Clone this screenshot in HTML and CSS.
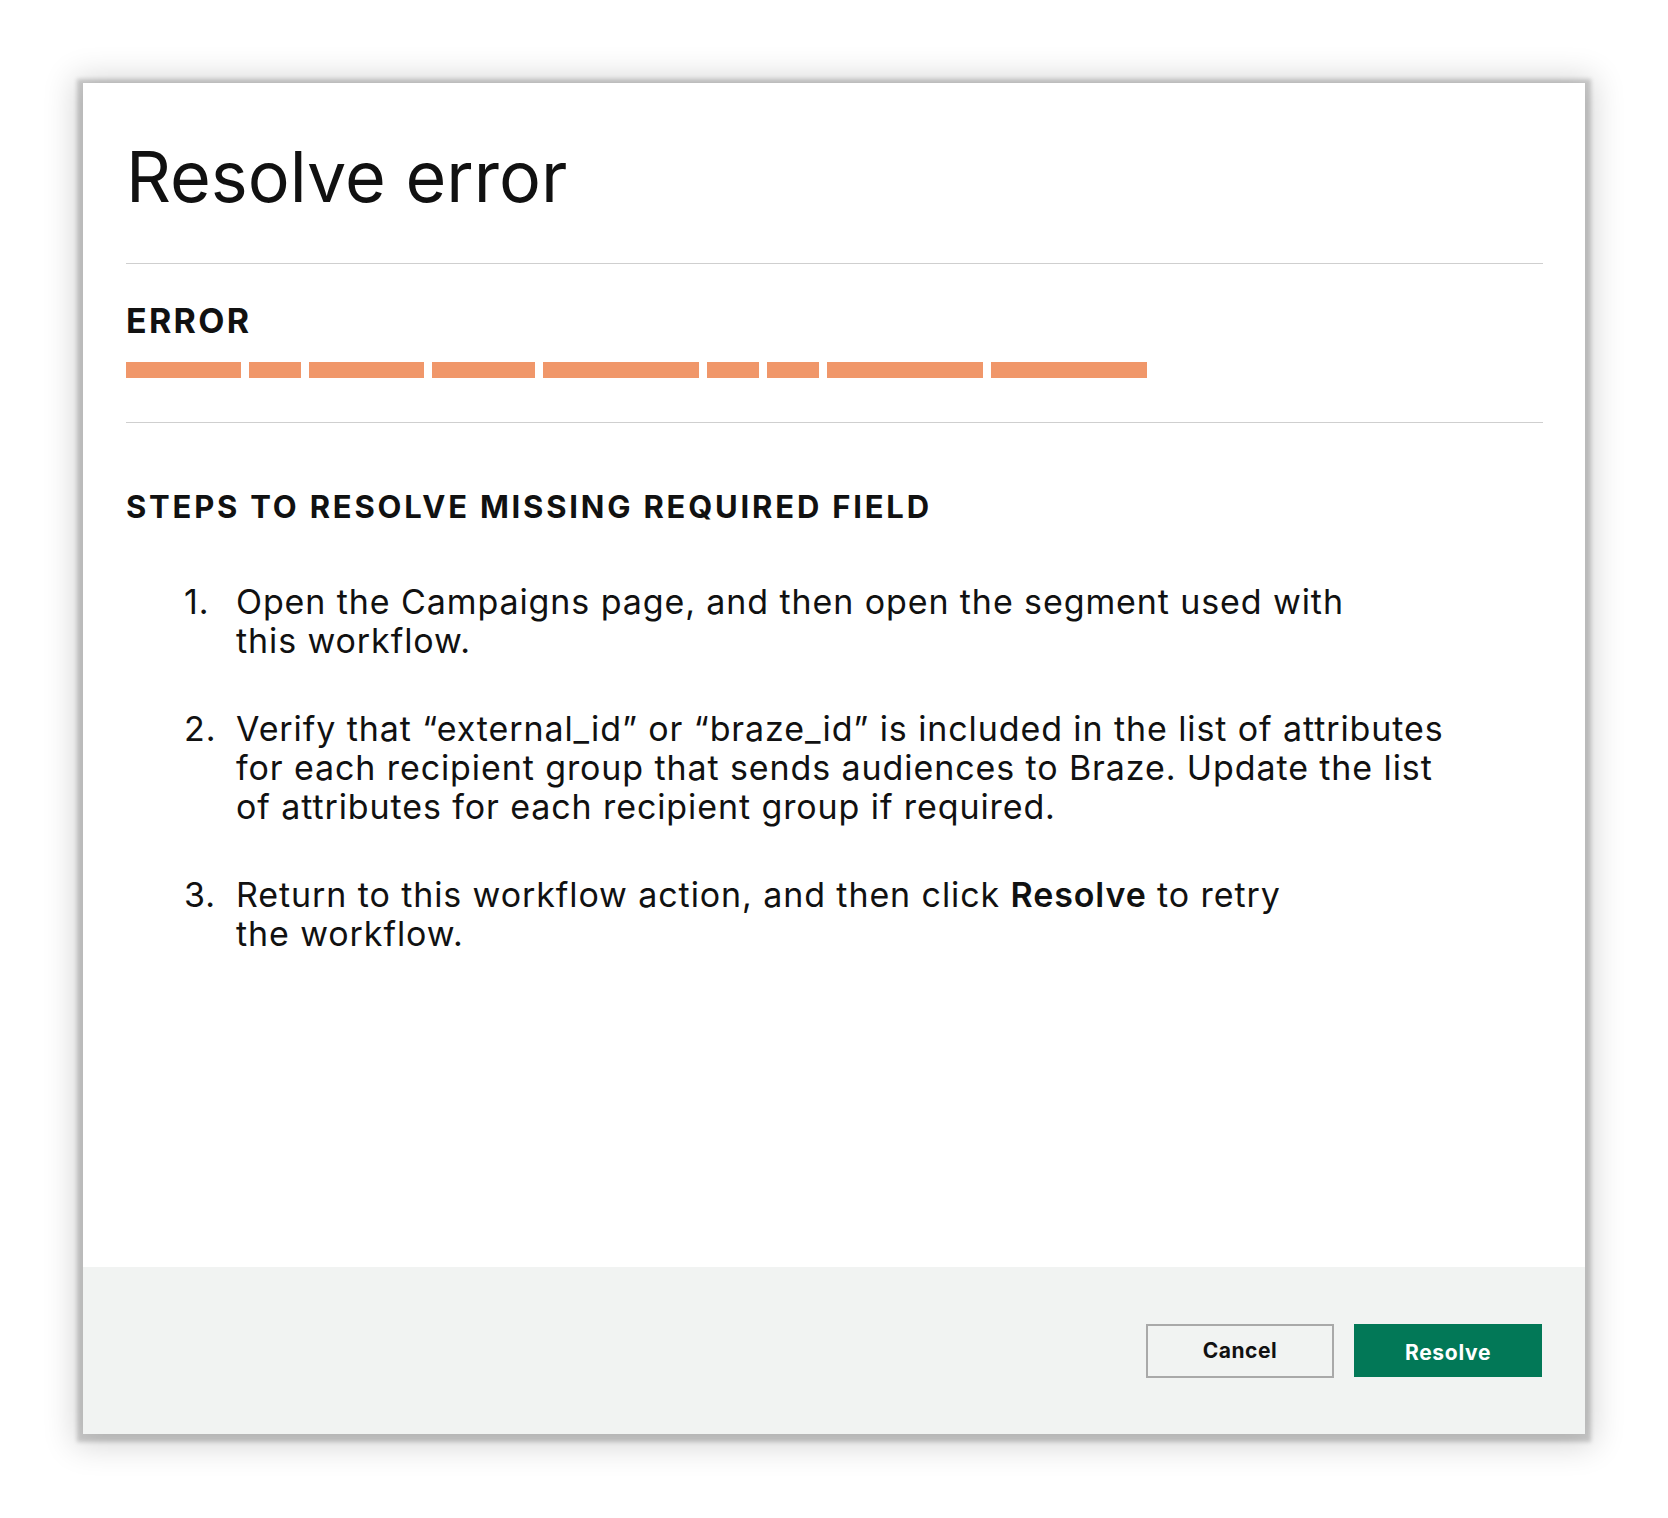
FILE: index.html
```html
<!DOCTYPE html>
<html lang="en">
<head>
    <meta charset="UTF-8">
    <meta name="viewport" content="width=device-width, initial-scale=1.0">
    <title>Resolve error</title>
    <link rel="stylesheet" href="styles.css">
</head>
<body>

<div class="modal">
    <div class="modal-body">
        <h1 class="title">Resolve error</h1>
        <hr class="divider">

        <h2 class="label">ERROR</h2>
        <!-- redacted error message -->
        <div class="redacted">
            <span class="bar" style="width: 115px"></span>
            <span class="bar" style="width: 52px"></span>
            <span class="bar" style="width: 115px"></span>
            <span class="bar" style="width: 103px"></span>
            <span class="bar" style="width: 156px"></span>
            <span class="bar" style="width: 52px"></span>
            <span class="bar" style="width: 52px"></span>
            <span class="bar" style="width: 156px"></span>
            <span class="bar" style="width: 156px"></span>
        </div>
        <hr class="divider divider-low">

        <h2 class="label steps-title">STEPS TO RESOLVE MISSING REQUIRED FIELD</h2>
        <ol class="steps">
            <li><span class="num">1.</span><p>Open the Campaigns page, and then open the segment used with<br>this workflow.</p></li>
            <li><span class="num">2.</span><p>Verify that “external_id” or “braze_id” is included in the list of attributes<br>for each recipient group that sends audiences to Braze. Update the list<br>of attributes for each recipient group if required.</p></li>
            <li><span class="num">3.</span><p>Return to this workflow action, and then click <b>Resolve</b> to retry<br>the workflow.</p></li>
        </ol>
    </div>

    <div class="modal-footer">
        <button class="btn btn-cancel">Cancel</button>
        <button class="btn btn-primary">Resolve</button>
    </div>
</div>

</body>
</html>
```

FILE: styles.css
```css
body, html {
    margin: 0;
    background-color: #fff;
    font-family: Inter, "Noto Sans", sans-serif;
    color: #111;
}

body {
    padding: 83px;
}

.modal {
    height: 1351px;
    display: flex;
    flex-direction: column;
    background-color: #fff;
    box-shadow: 0 2px 4px 6px rgba(0, 0, 0, 0.18), 0 3px 30px 9px rgba(0, 0, 0, 0.16);
}

.modal-body {
    flex: 1;
    padding: 52px 42px 0 43px;
}

.title {
    margin: 0;
    font-size: 70px;
    font-weight: 400;
    line-height: 84px;
    letter-spacing: 0;
}

.divider {
    margin: 44px 0 0;
    border: none;
    border-top: 1px solid #cfcfcf;
}

.divider-low {
    margin-top: 44px;
}

.label {
    margin: 37px 0 0;
    font-size: 34px;
    font-weight: 700;
    line-height: 40px;
    letter-spacing: 2.3px;
}

.steps-title {
    margin-top: 65px;
    font-size: 31px;
    line-height: 38px;
    letter-spacing: 2.8px;
}

/* orange placeholder bars */
.redacted {
    display: flex;
    gap: 8px;
    margin-top: 21px;
}

.bar {
    height: 16px;
    background-color: #f0976a;
}

.steps {
    list-style: none;
    margin: 56px 0 0;
    padding: 0 0 0 58px;
}

.steps li {
    display: flex;
    margin-bottom: 49px;
    font-size: 34px;
    line-height: 39px;
    letter-spacing: 0.9px;
}

.steps .num {
    width: 52px;
    flex-shrink: 0;
}

.steps p {
    margin: 0;
}

.steps b {
    font-weight: 600;
}

.modal-footer {
    height: 167px;
    display: flex;
    justify-content: flex-end;
    align-items: center;
    gap: 20px;
    padding-right: 43px;
    background-color: #f1f3f2;
}

.btn {
    width: 188px;
    height: 54px;
    font-family: Inter, sans-serif;
    font-size: 21px;
    font-weight: 700;
    letter-spacing: 0.5px;
    cursor: pointer;
}

.btn-cancel {
    background-color: transparent;
    border: 2px solid #a9a9a9;
    color: #111;
}

.btn-primary {
    height: 53px;
    padding-top: 5px;
    background-color: #027857;
    border: none;
    color: #fff;
    letter-spacing: 0.7px;
}
```
